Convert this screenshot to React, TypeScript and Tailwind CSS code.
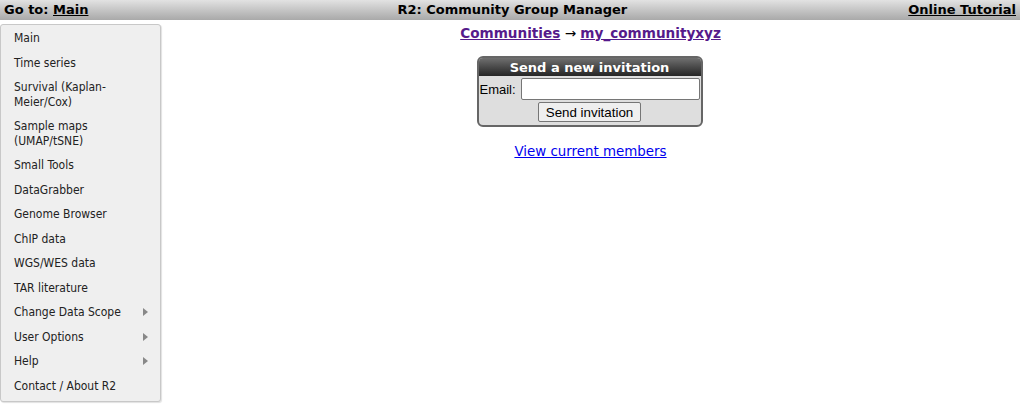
import { FC } from "react";

interface IMenuItem {
  label: string;
  sub?: boolean;
}

const menu: IMenuItem[] = [
  { label: "Main" },
  { label: "Time series" },
  { label: "Survival (Kaplan-Meier/Cox)" },
  { label: "Sample maps (UMAP/tSNE)" },
  { label: "Small Tools" },
  { label: "DataGrabber" },
  { label: "Genome Browser" },
  { label: "ChIP data" },
  { label: "WGS/WES data" },
  { label: "TAR literature" },
  { label: "Change Data Scope", sub: true },
  { label: "User Options", sub: true },
  { label: "Help", sub: true },
  { label: "Contact / About R2" },
];

const verdana = "font-['DejaVu_Sans',Verdana,sans-serif]";

const App: FC = () => {
  return (
    <div className="w-[1020px] h-[419px] bg-white text-black overflow-hidden">
      {/* top bar */}
      <div
        className={`${verdana} h-[20px] flex items-center justify-between px-[4px] text-[13px] font-bold bg-gradient-to-b from-[#e2e2e2] to-[#a9a9a9]`}
      >
        <span>
          Go to: <a href="#" className="underline text-black">Main</a>
        </span>
        <span className="pl-[28px]">R2: Community Group Manager</span>
        <a href="#" className="underline text-black">
          Online Tutorial
        </a>
      </div>

      <div className="flex">
        {/* side menu */}
        <div className="w-[161px] mt-[4px] shrink-0">
          <ul className="bg-[#efefef] border border-[#c8c8c8] rounded-[3px] shadow-[1px_1px_1px_rgba(0,0,0,0.12)] pt-[1px] pb-[3px] font-['DejaVu_Sans_Condensed',Tahoma,sans-serif] text-[12px] text-[#222]">
            {menu.map((item) => (
              <li
                key={item.label}
                className="flex items-center justify-between pl-[13px] pr-[12px] py-[5px] leading-[14.5px]"
              >
                <span className="max-w-[118px]">{item.label}</span>
                {item.sub && (
                  <span className="w-0 h-0 border-y-[4px] border-y-transparent border-l-[5px] border-l-[#888]" />
                )}
              </li>
            ))}
          </ul>
        </div>

        {/* main content */}
        <div className="flex-1 flex flex-col items-center">
          <div className={`${verdana} mt-[3px] text-[13.6px] font-bold text-[#551a8b]`}>
            <a href="#" className="underline">Communities</a>
            <span className="text-black font-normal"> → </span>
            <a href="#" className="underline">my_communityxyz</a>
          </div>

          <div className="mt-[13px] mr-[2px] w-[226px] border-2 border-[#666] rounded-[6px] bg-[#dedede] overflow-hidden font-['Liberation_Sans',Arial,sans-serif]">
            <div
              className={`${verdana} h-[18px] flex items-center justify-center text-white text-[13px] font-bold bg-gradient-to-b from-[#707070] to-[#262626]`}
            >
              Send a new invitation
            </div>
            <div className="flex items-center gap-[5px] pl-[1px] pr-[1px] pt-[2px] text-[13px]">
              <span>Email:</span>
              <input className="flex-1 h-[22px] bg-white border border-[#767676] rounded-[2px] outline-none" />
            </div>
            <div className="flex justify-center pt-[2px] pb-[3px]">
              <button className="h-[20px] px-[7px] text-[13.33px] bg-[#efefef] border border-[#767676] rounded-[2px] leading-none">
                Send invitation
              </button>
            </div>
          </div>

          <a
            href="#"
            className={`${verdana} mt-[15px] text-[13.4px] text-[#0000ee] underline`}
          >
            View current members
          </a>
        </div>
      </div>
    </div>
  );
};

export default App;
